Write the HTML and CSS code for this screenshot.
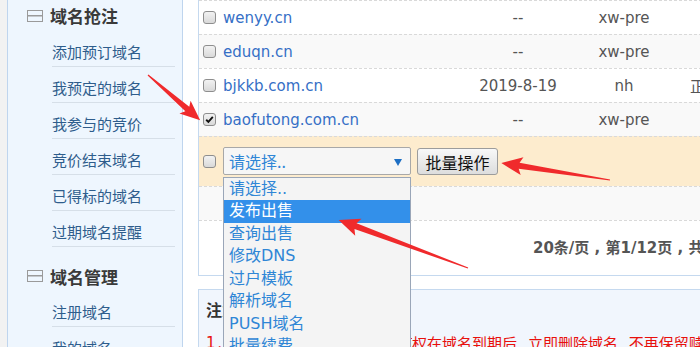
FILE: index.html
```html
<!DOCTYPE html>
<html lang="zh-CN">
<head>
<meta charset="utf-8">
<title>域名抢注</title>
<link rel="stylesheet" href="styles.css">
</head>
<body>
<div class="page">
  <aside class="side">
    <div class="grp">
      <div class="gh"><span class="minus"></span>域名抢注</div>
      <a class="it">添加预订域名</a>
      <a class="it">我预定的域名</a>
      <a class="it">我参与的竞价</a>
      <a class="it">竞价结束域名</a>
      <a class="it">已得标的域名</a>
      <a class="it">过期域名提醒</a>
    </div>
    <div class="grp g2">
      <div class="gh"><span class="minus"></span>域名管理</div>
      <a class="it">注册域名</a>
      <a class="it">我的域名</a>
    </div>
  </aside>
  <main class="main">
    <section class="panel">
      <div class="row"><span class="cb"></span><span class="dm">wenyy.cn</span><span class="dt">--</span><span class="tp">xw-pre</span><span class="st"></span></div>
      <div class="row"><span class="cb"></span><span class="dm">eduqn.cn</span><span class="dt">--</span><span class="tp">xw-pre</span><span class="st"></span></div>
      <div class="row"><span class="cb"></span><span class="dm">bjkkb.com.cn</span><span class="dt">2019-8-19</span><span class="tp">nh</span><span class="st">正常</span></div>
      <div class="row"><span class="cb on"><svg viewBox="0 0 13 13" width="13" height="13"><path d="M2.6 6.8 L5.2 9.4 L10.4 3.4" fill="none" stroke="#111" stroke-width="2.2"/></svg></span><span class="dm">baofutong.com.cn</span><span class="dt">--</span><span class="tp">xw-pre</span><span class="st"></span></div>
      <div class="row act">
        <span class="cb"></span>
        <div class="sel">请选择..<span class="tri"></span>
          <ul class="dd">
            <li>请选择..</li>
            <li class="hl">发布出售</li>
            <li>查询出售</li>
            <li>修改DNS</li>
            <li>过户模板</li>
            <li>解析域名</li>
            <li>PUSH域名</li>
            <li>批量续费</li>
          </ul>
        </div>
        <button class="btn">批量操作</button>
      </div>
      <div class="row blank"></div>
      <div class="pager">20条/页 , 第1/12页 , 共233条记录</div>
    </section>
    <section class="note">
      <div class="nt">注意事项</div>
      <div class="nl"><span class="num">1</span><span class="hid">、域名过期未续费，注册商有</span><span>权在域名到期后 , 立即删除域名 , 不再保留赎回期</span></div>
    </section>
  </main>
  <svg class="arrows" width="700" height="347" viewBox="0 0 700 347">
    <g fill="#f02a2c">
      <polygon transform="translate(148,75) rotate(40.9)" points="0,-0.6 52,-3 49,-8.5 69,0 49,8.5 52,3 0,0.6"/>
      <polygon transform="translate(468,268) rotate(200.4)" points="0,-0.6 120,-3 117,-9 138,0 117,9 120,3 0,0.6"/>
      <polygon transform="translate(610,180) rotate(188.9)" points="0,-0.6 92,-3 89,-9 110,0 89,9 92,3 0,0.6"/>
    </g>
  </svg>
</div>
</body>
</html>
```
FILE: styles.css
```css
* { box-sizing: border-box; margin: 0; padding: 0; }
html, body { width: 700px; height: 347px; overflow: hidden; background: #fff; }
body { font-family: "DejaVu Sans", "Noto Sans CJK SC", sans-serif; }

.page { position: relative; display: flex; align-items: flex-start; border-left: 7px solid #f2f2f2; height: 347px; }

/* sidebar */
.side { width: 176px; flex: none; align-self: stretch; background: #eef6fe; border-left: 1px solid #bfd5ee; border-right: 1px solid #bfd5ee; font-family: "Noto Sans CJK SC", sans-serif; }
.gh { height: 31px; display: flex; align-items: center; gap: 7px; padding-left: 19px; font-size: 17px; font-weight: bold; color: #3a3a3a; }
.g2 { margin-top: 14px; }
.g2 .gh { height: 30px; }
.minus { width: 16px; height: 12px; border: 1.5px solid #9a9a9a; background: linear-gradient(#9a9a9a, #9a9a9a) center / 100% 1.5px no-repeat; }
.it { display: block; margin: 0 7px 0 44px; height: 36px; padding-top: 6px; line-height: 29px; font-size: 15px; color: #2e5d8c; border-bottom: 1px solid #d6dfe8; }

/* main */
.main { margin-left: 15px; width: 620px; flex: none; }
.panel { border: 1px solid #c5d9ef; border-top: none; background: #fff; }
.row { display: flex; align-items: center; height: 34px; padding-left: 4px; border-top: 1px dashed #d9d9d9; font-size: 15px; color: #555; }
.row:nth-child(even) { background: #f9f9f9; }
.cb { width: 13px; height: 13px; flex: none; margin-right: 7px; border: 1px solid #8e8e8e; border-radius: 3px; background: linear-gradient(#f2f2f2, #d9d9d9); display: flex; align-items: center; justify-content: center; }
.cb svg { display: block; }
.dm { width: 245px; color: #356fc6; white-space: nowrap; }
.dt { width: 100px; text-align: center; }
.tp { width: 112px; text-align: center; }
.st { padding-left: 10px; color: #555; font-family: "Noto Sans CJK SC", sans-serif; white-space: nowrap; }

.row.act { height: 50px; background: #fdecce; }
.sel { position: relative; width: 188px; height: 28px; margin-top: -2px; border: 1px solid #a8a8a8; border-radius: 2px; background: #f6f6f6; color: #2f86d6; font-size: 16px; line-height: 26px; padding-left: 5px; font-family: "Noto Sans CJK SC", sans-serif; }
.tri { position: absolute; right: 8px; top: 11px; width: 0; height: 0; border-left: 4.5px solid transparent; border-right: 4.5px solid transparent; border-top: 7px solid #1d6fc4; }
.dd { position: absolute; left: -1px; top: 29px; width: 188px; list-style: none; border: 1px solid #9aa6b8; background: #f4f4f4; z-index: 5; font-family: "DejaVu Sans", "Noto Sans CJK SC", sans-serif; }
.dd li { height: 22.5px; line-height: 22.5px; padding-left: 5px; color: #2f86d6; font-size: 16px; white-space: nowrap; }
.dd li.hl { background: #3390ea; color: #fff; }
.btn { margin-left: 6px; width: 81px; height: 27px; border: 1px solid #9c9c9c; border-radius: 3px; background: linear-gradient(#f8f8f8, #dddddd); font-family: "Noto Sans CJK SC", sans-serif; font-size: 16px; color: #111; }

.pager { height: 55px; border-top: 1px dashed #d9d9d9; padding-left: 334px; line-height: 54px; font-size: 15px; font-weight: bold; color: #555; white-space: nowrap; }

.note { margin-top: 13px; height: 80px; border: 1px solid #c5d9ef; background: #f1f6fd; padding: 8px 0 0 7px; }
.nt { font-family: "Noto Sans CJK SC", sans-serif; font-size: 16px; font-weight: bold; color: #333; line-height: 22px; }
.nl { margin-top: 12px; display: flex; white-space: nowrap; color: #e8100c; font-size: 15px; line-height: 22px; font-family: "Noto Sans CJK SC", sans-serif; }
.num { width: 12px; font-family: "DejaVu Sans", sans-serif; }
.hid { width: 194px; overflow: hidden; }

.arrows { position: absolute; left: -7px; top: 0; pointer-events: none; z-index: 10; }
```
